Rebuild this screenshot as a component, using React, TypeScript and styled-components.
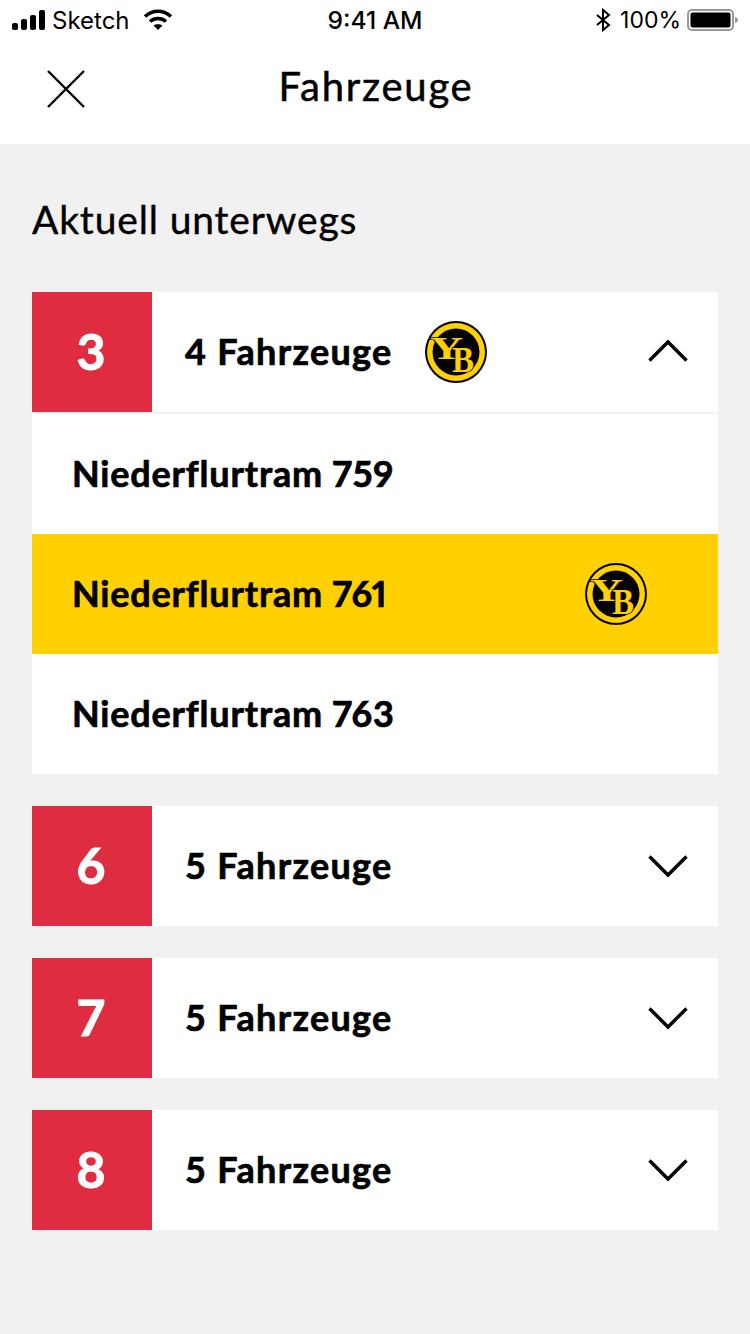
import * as React from 'react';
import styled, { createGlobalStyle } from 'styled-components';

const GlobalStyle = createGlobalStyle`
  html, body {
    margin: 0;
    padding: 0;
    background: #f1f1f1;
  }
  * {
    box-sizing: border-box;
  }
`;

const Page = styled.div`
  width: 750px;
  height: 1334px;
  overflow: hidden;
  background: #f1f1f1;
  font-family: 'Lato', 'Liberation Sans', sans-serif;
  color: #000;
`;

const Top = styled.header`
  background: #fff;
  height: 144px;
`;

const StatusBar = styled.div`
  display: grid;
  grid-template-columns: 1fr auto 1fr;
  align-items: center;
  height: 40px;
  padding: 0 12px;
  font-family: 'Inter', 'Liberation Sans', sans-serif;
  font-size: 24px;
  color: #000;
`;

const StatusLeft = styled.div`
  display: flex;
  align-items: center;
  gap: 7px;
`;

const WifiIcon = styled.svg`
  margin-left: 6px;
`;

const StatusRight = styled.div`
  display: flex;
  align-items: center;
  justify-content: flex-end;
  gap: 6px;
  font-size: 23px;
`;

const BluetoothIcon = styled.svg`
  margin-right: 3px;
`;

const StatusTime = styled.div`
  font-weight: 500;
  font-size: 24.6px;
`;

const NavBar = styled.nav`
  display: flex;
  align-items: center;
  justify-content: center;
  height: 96px;
  padding: 0 0 5px 2px;
  position: relative;
`;

const CloseButton = styled.button`
  position: absolute;
  left: 46px;
  top: 29px;
  width: 40px;
  height: 40px;
  padding: 0;
  border: 0;
  background: none;
`;

const NavTitle = styled.h1`
  margin: 0;
  font-size: 40px;
  font-weight: 400;
  letter-spacing: 1.75px;
  -webkit-text-stroke: 0.5px #000;
`;

const Content = styled.main`
  padding: 50px 32px 0;
`;

const Heading = styled.h2`
  margin: 0 0 48px;
  height: 50px;
  line-height: 50px;
  font-size: 39px;
  font-weight: 400;
  letter-spacing: 0.85px;
  -webkit-text-stroke: 0.4px #000;
`;

const Lines = styled.div`
  display: flex;
  flex-direction: column;
  gap: 32px;
`;

const LineCard = styled.section`
  background: #fff;
`;

const LineHeader = styled.div<{ $open?: boolean }>`
  display: flex;
  align-items: center;
  height: ${(p) => (p.$open ? '122px' : '120px')};
  border-bottom: ${(p) => (p.$open ? '2px solid #f1f1f1' : '0')};
`;

const LineNumber = styled.div`
  flex: none;
  display: flex;
  align-items: center;
  justify-content: center;
  width: 120px;
  height: 120px;
  padding: 0 2px 3px 0;
  background: #df2c41;
  color: #fff;
  font-size: 50px;
  font-weight: 700;
  -webkit-text-stroke: 1px #fff;
`;

const VehicleCount = styled.div`
  margin-left: 33px;
  padding-bottom: 3px;
  font-size: 36px;
  font-weight: 700;
  letter-spacing: 1.3px;
  -webkit-text-stroke: 0.7px #000;
`;

const HeaderBadge = styled.div`
  margin-left: 32px;
  display: flex;
`;

const Chevron = styled.svg`
  margin-left: auto;
  margin-right: 30px;
  flex: none;
`;

const VehicleRow = styled.div<{ $active?: boolean }>`
  display: flex;
  align-items: center;
  justify-content: space-between;
  height: 120px;
  padding: 0 71px 0 40px;
  background: ${(p) => (p.$active ? '#ffd100' : '#fff')};
`;

const VehicleName = styled.span`
  padding-bottom: 3px;
  font-size: 36px;
  font-weight: 700;
  font-variant-numeric: proportional-nums;
  letter-spacing: 0.82px;
  -webkit-text-stroke: 0.7px #000;
`;

const YbLogo: React.FC = () => (
  <svg width="62" height="62" viewBox="0 0 62 62">
    <circle cx="31" cy="31" r="31" fill="#000" />
    <circle cx="31" cy="31" r="29" fill="#ffd100" />
    <circle cx="31" cy="31" r="23.5" fill="#000" />
    <g
      fill="#ffd100"
      stroke="#000"
      strokeWidth="1.6"
      paintOrder="stroke"
      fontFamily="'Liberation Serif', serif"
      fontWeight="700"
    >
      <text x="5" y="38" fontSize="32" textLength="33" lengthAdjust="spacingAndGlyphs">Y</text>
      <text x="27" y="51" fontSize="36" textLength="22" lengthAdjust="spacingAndGlyphs">B</text>
    </g>
  </svg>
);

const ChevronIcon: React.FC<{ up?: boolean }> = ({ up }) => (
  <Chevron width="40" height="26" viewBox="0 0 40 26" fill="none">
    <path
      d={up ? 'M1.5 21.5 L20 3 L38.5 21.5' : 'M1.5 3.5 L20 22 L38.5 3.5'}
      stroke="#000"
      strokeWidth="3.4"
    />
  </Chevron>
);

const lines = [
  { id: '3', count: 4, open: true, yb: true },
  { id: '6', count: 5 },
  { id: '7', count: 5 },
  { id: '8', count: 5 },
];

const vehicles = [
  { name: 'Niederflurtram 759' },
  { name: 'Niederflurtram 761', active: true },
  { name: 'Niederflurtram 763' },
];

const App: React.FC = () => (
  <Page>
    <GlobalStyle />
    <Top>
      <StatusBar>
        <StatusLeft>
          <svg width="33" height="20" viewBox="0 0 33 20" fill="#000">
            <rect x="0" y="13" width="6" height="7" rx="2" />
            <rect x="9" y="9" width="6" height="11" rx="2" />
            <rect x="18" y="5" width="6" height="15" rx="2" />
            <rect x="27" y="0" width="6" height="20" rx="2" />
          </svg>
          <span>Sketch</span>
          <WifiIcon width="30" height="22" viewBox="0 0 30 22" fill="none" stroke="#000" strokeWidth="3.4">
            <path d="M2 7.5 C9.5 0.5 20.5 0.5 28 7.5" />
            <path d="M7 12.5 C11.5 8.5 18.5 8.5 23 12.5" />
            <path d="M15 21 L10.5 16.5 C13 14.8 17 14.8 19.5 16.5 Z" fill="#000" stroke="none" />
          </WifiIcon>
        </StatusLeft>
        <StatusTime>9:41 AM</StatusTime>
        <StatusRight>
          <BluetoothIcon width="16" height="24" viewBox="0 0 16 24" fill="none" stroke="#000" strokeWidth="2">
            <path d="M2 7 L14 17 L8 22 L8 2 L14 7 L2 17" />
          </BluetoothIcon>
          <span>100%</span>
          <svg width="51" height="24" viewBox="0 0 51 24">
            <rect x="1" y="2" width="45" height="20" rx="4" fill="none" stroke="#999" strokeWidth="2" />
            <rect x="3.5" y="4.5" width="40" height="15" rx="2" fill="#000" />
            <path d="M48 9 C50 9.5 51 10.5 51 12 C51 13.5 50 14.5 48 15 Z" fill="#999" />
          </svg>
        </StatusRight>
      </StatusBar>
      <NavBar>
        <CloseButton aria-label="Schliessen">
          <svg width="40" height="40" viewBox="0 0 40 40" fill="none" stroke="#000" strokeWidth="2.4">
            <path d="M2 2 L38 38 M38 2 L2 38" />
          </svg>
        </CloseButton>
        <NavTitle>Fahrzeuge</NavTitle>
      </NavBar>
    </Top>
    <Content>
      <Heading>Aktuell unterwegs</Heading>
      <Lines>
        {lines.map((line) => (
          <LineCard key={line.id}>
            <LineHeader $open={line.open}>
              <LineNumber>{line.id}</LineNumber>
              <VehicleCount>{line.count} Fahrzeuge</VehicleCount>
              {line.yb && (
                <HeaderBadge>
                  <YbLogo />
                </HeaderBadge>
              )}
              <ChevronIcon up={line.open} />
            </LineHeader>
            {line.open &&
              vehicles.map((v) => (
                <VehicleRow key={v.name} $active={v.active}>
                  <VehicleName>{v.name}</VehicleName>
                  {v.active && <YbLogo />}
                </VehicleRow>
              ))}
          </LineCard>
        ))}
      </Lines>
    </Content>
  </Page>
);

export default App;
